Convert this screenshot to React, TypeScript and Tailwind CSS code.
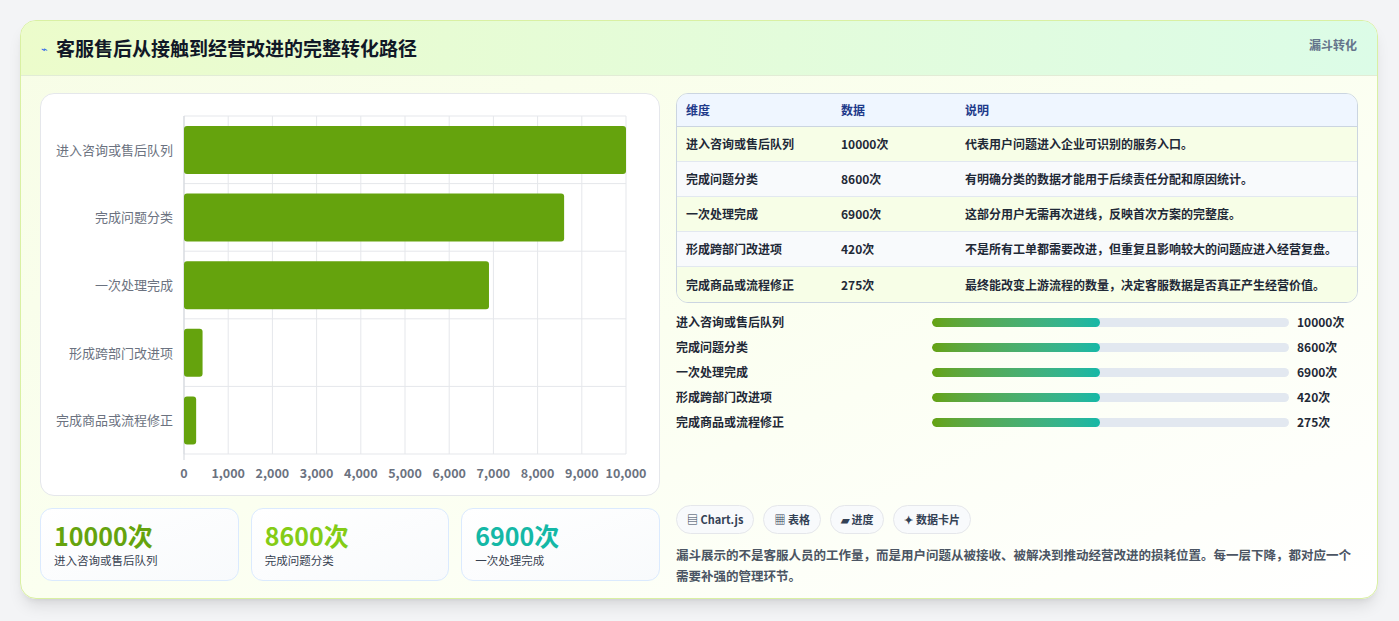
import React from 'react';

const rows = [
  { name: '进入咨询或售后队列', v: 10000, note: '代表用户问题进入企业可识别的服务入口。' },
  { name: '完成问题分类', v: 8600, note: '有明确分类的数据才能用于后续责任分配和原因统计。' },
  { name: '一次处理完成', v: 6900, note: '这部分用户无需再次进线，反映首次方案的完整度。' },
  { name: '形成跨部门改进项', v: 420, note: '不是所有工单都需要改进，但重复且影响较大的问题应进入经营复盘。' },
  { name: '完成商品或流程修正', v: 275, note: '最终能改变上游流程的数量，决定客服数据是否真正产生经营价值。' },
];

const FONT = { fontFamily: '"Noto Sans CJK SC", "Noto Sans", sans-serif' };

function Chart() {
  const x0 = 143, x1 = 585, y0 = 22, y1 = 360;
  const band = (y1 - y0) / 5;
  const sx = (v: number) => x0 + ((x1 - x0) * v) / 10000;
  return (
    <svg width="619" height="402" className="block">
      {Array.from({ length: 11 }).map((_, i) => (
        <line key={i} x1={sx(i * 1000)} x2={sx(i * 1000)} y1={y0} y2={y1} stroke="#e5e7eb" />
      ))}
      {Array.from({ length: 6 }).map((_, i) => (
        <line key={i} x1={x0} x2={x1} y1={y0 + i * band} y2={y0 + i * band} stroke="#e5e7eb" />
      ))}
      <line x1={x0} x2={x0} y1={y0} y2={y1 + 6} stroke="#d1d5db" />
      {rows.map((r, i) => (
        <g key={r.name}>
          <rect x={x0} y={y0 + i * band + 10} width={sx(r.v) - x0} height={48} rx={3} fill="#65a30d" />
          <text x={x0 - 11} y={y0 + i * band + band / 2 + 5} textAnchor="end" fontSize="13" fill="#6b7280" style={FONT}>{r.name}</text>
        </g>
      ))}
      {Array.from({ length: 11 }).map((_, i) => (
        <text key={i} x={sx(i * 1000)} y={384} textAnchor="middle" fontSize="12.5" fontWeight="700" fill="#6b7280" style={FONT}>
          {(i * 1000).toLocaleString('en-US')}
        </text>
      ))}
    </svg>
  );
}

export default function App() {
  return (
    <div className="w-[1399px] h-[621px] bg-[#f3f4f6] pt-[20px] pl-[20px]" style={FONT}>
      <div className="w-[1358px] h-[579px] rounded-[16px] border border-[#d9f0a3] bg-gradient-to-br from-[#f7fde6] via-[#fbfff0] to-white shadow-lg overflow-hidden">
        <div className="h-[55px] flex items-center justify-between px-[20px] bg-gradient-to-r from-[#ecfccb] to-[#dcfce7] border-b border-[#e2ecd6]">
          <div className="flex items-center gap-[8px]">
            <span className="text-[11px] text-[#2563eb]">⌁</span>
            <span className="text-[19px] font-bold text-[#111827]">客服售后从接触到经营改进的完整转化路径</span>
          </div>
          <span className="self-start mt-[15px] text-[12px] font-bold text-[#64748b]">漏斗转化</span>
        </div>
        <div className="flex gap-[16px] px-[19px] pt-[17px]">
          <div className="w-[620px] flex flex-col gap-[12px]">
            <div className="h-[403px] rounded-[14px] border border-[#e5e7eb] bg-white overflow-hidden">
              <Chart />
            </div>
            <div className="grid grid-cols-3 gap-[12px]">
              {[['10000次', 'text-[#65a30d]', '进入咨询或售后队列'], ['8600次', 'text-[#84cc16]', '完成问题分类'], ['6900次', 'text-[#14b8a6]', '一次处理完成']].map(([v, c, l]) => (
                <div key={l} className="h-[73px] rounded-[12px] border border-[#dbeafe] bg-gradient-to-br from-white to-[#f8fafc] px-[13px] pt-[9px]">
                  <div className={`text-[25px] font-bold leading-[34px] ${c}`}>{v}</div>
                  <div className="text-[11.5px] text-[#374151]">{l}</div>
                </div>
              ))}
            </div>
          </div>
          <div className="w-[685px] flex flex-col">
            <div className="rounded-[12px] border border-[#cbd5e1] overflow-hidden text-[12px] text-[#1f2937]">
              <div className="flex h-[33px] items-center bg-[#eff6ff] border-b border-[#cbd5e1] font-bold text-[#1e3a8a]">
                <div className="w-[164px] pl-[9px]">维度</div>
                <div className="w-[124px]">数据</div>
                <div>说明</div>
              </div>
              {rows.map((r, i) => (
                <div key={r.name} className={`flex h-[35px] items-center font-semibold ${i % 2 ? 'bg-[#f8fafc]' : 'bg-[#f7fee7]'} ${i < 4 ? 'border-b border-[#e2e8f0]' : ''}`}>
                  <div className="w-[164px] pl-[9px]">{r.name}</div>
                  <div className="w-[124px]">{r.v}次</div>
                  <div>{r.note}</div>
                </div>
              ))}
            </div>
            <div className="mt-[10px] flex flex-col gap-[7px]">
              {rows.map((r) => (
                <div key={r.name} className="flex items-center h-[18px] text-[12px] font-semibold text-[#1f2937]">
                  <div className="w-[256px]">{r.name}</div>
                  <div className="w-[357px] h-[9px] rounded-full bg-[#e2e8f0] overflow-hidden">
                    <div className="h-full w-[168px] rounded-full bg-gradient-to-r from-[#65a30d] to-[#14b8a6]" />
                  </div>
                  <div className="ml-[8px] font-bold">{r.v}次</div>
                </div>
              ))}
            </div>
            <div className="mt-[74px] flex gap-[9px]">
              {['▤ Chart.js', '▦ 表格', '▰ 进度', '✦ 数据卡片'].map((t) => (
                <span key={t} className="h-[29px] px-[10px] flex items-center rounded-full border border-[#e5e7eb] bg-[#f8fafc] text-[11px] font-bold text-[#334155]">{t}</span>
              ))}
            </div>
            <p className="mt-[10px] text-[12.5px] leading-[21px] font-semibold text-[#4b5563]">
              漏斗展示的不是客服人员的工作量，而是用户问题从被接收、被解决到推动经营改进的损耗位置。每一层下降，都对应一个需要补强的管理环节。
            </p>
          </div>
        </div>
      </div>
    </div>
  );
}
